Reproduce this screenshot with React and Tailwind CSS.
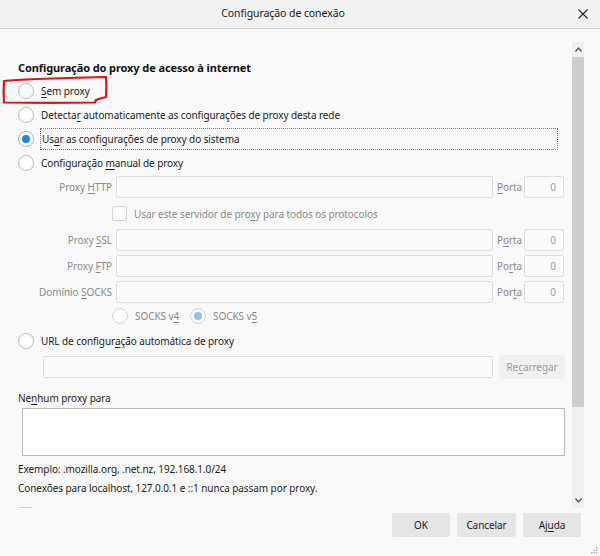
import React from "react";

const U = ({ children }) => <span className="underline underline-offset-2">{children}</span>;

function Radio({ checked = false, disabled = false }) {
  return (
    <div
      className={`w-[16px] h-[16px] rounded-full border shrink-0 flex items-center justify-center ${
        disabled ? "border-[#d6d6d6] bg-[#fbfbfb]" : checked ? "border-[#9bbcd6] bg-white" : "border-[#bdbdbd] bg-white"
      }`}
    >
      {checked && (
        <div className={`w-[8px] h-[8px] rounded-full ${disabled ? "bg-[#8fc3e8]" : "bg-[#1f87d6]"}`} />
      )}
    </div>
  );
}

function Input({ className = "", children }) {
  return (
    <div className={`h-[22px] shrink-0 border border-[#dedede] bg-[#fafafa] rounded-[2px] ${className}`}>{children}</div>
  );
}

function ProxyRow({ label, porta, className = "" }) {
  return (
    <div className={`flex items-center h-[22px] ${className}`}>
      <div className="w-[112px] text-right text-[#8a8a8a]">{label}</div>
      <Input className="ml-[4px] w-[377px]" />
      <div className="ml-[4px] w-[27px] text-[#8a8a8a] whitespace-nowrap">{porta}</div>
      <Input className="w-[40px] flex items-center justify-end pr-[7px] text-[#a0a0a0]">0</Input>
    </div>
  );
}

export default function App() {
  return (
    <div
      className="relative w-[600px] h-[556px] bg-[#f9f9f9] flex flex-col text-[10px] tracking-[-0.08px] text-[#1c1c1c] overflow-hidden"
      style={{ fontFamily: '"Noto Sans", "Open Sans", sans-serif' }}
    >
      {/* Title bar */}
      <div className="h-[29px] shrink-0 bg-[#f1f1f1] border-b border-[#cdcdcd] flex items-center">
        <div className="flex-1 text-center text-[10.5px] text-[#1a1a1a]">Configuração de conexão</div>
        <div className="w-[34px] flex items-center justify-center">
          <svg width="10" height="10" viewBox="0 0 10 10">
            <path d="M0.5 0.5 L9.5 9.5 M9.5 0.5 L0.5 9.5" stroke="#222" strokeWidth="1.1" />
          </svg>
        </div>
      </div>

      {/* Main */}
      <div className="flex flex-col pt-[13px] pr-[16px]">
        <div className="flex h-[466px] shrink-0">
          <div className="flex-1 overflow-hidden leading-[16px]">
            <div className="ml-[18px] mt-[18px] h-[16px] text-[11px] font-bold tracking-[-0.1px] text-[#111]">
              Configuração do proxy de acesso à internet
            </div>

            <div className="mt-[3px] h-[24px] flex items-center pl-[18px]">
              <Radio />
              <span className="ml-[7px]"><U>S</U>em proxy</span>
            </div>
            <div className="h-[24px] flex items-center pl-[18px]">
              <Radio />
              <span className="ml-[7px]">Detecta<U>r</U> automaticamente as configurações de proxy desta rede</span>
            </div>
            <div className="h-[24px] flex items-center pl-[18px]">
              <Radio checked />
              <div className="ml-[6px] w-[518px] h-[22px] border border-dotted border-[#7a7a7a] pl-[1px] flex items-center">
                Us<U>a</U>r as configurações de proxy do sistema
              </div>
            </div>
            <div className="h-[24px] flex items-center pl-[18px]">
              <Radio />
              <span className="ml-[7px]">Configuração <U>m</U>anual de proxy</span>
            </div>

            <ProxyRow className="mt-[1px]" label={<>Proxy <U>H</U>TTP</>} porta={<><U>P</U>orta</>} />
            <div className="h-[31px] flex items-center pl-[112px]">
              <div className="w-[15px] h-[15px] border border-[#d4d4d4] rounded-[2px] bg-[#fbfbfb]" />
              <span className="ml-[7px] text-[#8a8a8a]">Usar este servidor de pro<U>x</U>y para todos os protocolos</span>
            </div>
            <ProxyRow label={<>Proxy <U>S</U>SL</>} porta={<>P<U>o</U>rta</>} />
            <ProxyRow className="mt-[4px]" label={<>Proxy <U>F</U>TP</>} porta={<>Po<U>r</U>ta</>} />
            <ProxyRow className="mt-[4px]" label={<>Domínio <U>S</U>OCKS</>} porta={<>Por<U>t</U>a</>} />

            <div className="h-[26px] flex items-center pl-[112px] text-[#8a8a8a]">
              <div className="w-[78px] flex items-center">
                <Radio disabled />
                <span className="ml-[7px]">SOCKS v<U>4</U></span>
              </div>
              <Radio checked disabled />
              <span className="ml-[7px]">SOCKS v<U>5</U></span>
            </div>

            <div className="h-[24px] flex items-center pl-[18px]">
              <Radio />
              <span className="ml-[7px]">URL de configur<U>a</U>ção automática de proxy</span>
            </div>
            <div className="mt-[2px] h-[24px] flex items-center pl-[43px]">
              <Input className="w-[450px]" />
              <div className="ml-[6px] w-[66px] h-[24px] bg-[#f0f0f0] rounded-[2px] flex items-center justify-center text-[#9a9a9a]">
                Re<U>c</U>arregar
              </div>
            </div>

            <div className="mt-[11px] ml-[18px] h-[16px]">Ne<U>n</U>hum proxy para</div>
            <div className="mt-[2px] ml-[22px] w-[543px] h-[48px] bg-white border border-[#bcbcbc]" />
            <div className="mt-[5px] ml-[18px] h-[16px]">Exemplo: .mozilla.org, .net.nz, 192.168.1.0/24</div>
            <div className="mt-[3px] ml-[18px] h-[16px]">Conexões para localhost, 127.0.0.1 e ::1 nunca passam por proxy.</div>
            <div className="mt-[11px] ml-[18px] w-[15px] h-[15px] border border-[#d0d0d0] rounded-[2px] bg-white" />
          </div>

          {/* Scrollbar */}
          <div className="w-[12px] flex flex-col bg-[#f0f0f0]">
            <div className="h-[15px] shrink-0 flex items-center justify-center">
              <svg width="7" height="5" viewBox="0 0 7 5">
                <path d="M0.5 4.5 L3.5 1 L6.5 4.5" stroke="#555" strokeWidth="1.3" fill="none" />
              </svg>
            </div>
            <div className="h-[350px] shrink-0 bg-[#cdcdcd]" />
            <div className="flex-1" />
            <div className="h-[15px] shrink-0 flex items-center justify-center">
              <svg width="7" height="5" viewBox="0 0 7 5">
                <path d="M0.5 0.5 L3.5 4 L6.5 0.5" stroke="#555" strokeWidth="1.3" fill="none" />
              </svg>
            </div>
          </div>
        </div>

        {/* Buttons */}
        <div className="mt-[5px] flex justify-end gap-[7px] mr-[3px]">
          <div className="w-[58px] h-[24px] bg-[#e5e5e5] rounded-[2px] flex items-center justify-center">OK</div>
          <div className="w-[59px] h-[24px] bg-[#e5e5e5] rounded-[2px] flex items-center justify-center">Cancelar</div>
          <div className="w-[58px] h-[24px] bg-[#e5e5e5] rounded-[2px] flex items-center justify-center">
            Aj<U>u</U>da
          </div>
        </div>
      </div>

      {/* Resize grip */}
      <svg className="absolute right-[2px] bottom-[2px]" width="7" height="7" viewBox="0 0 7 7">
        <rect x="5" y="0" width="1.5" height="1.5" fill="#b0b0b0" />
        <rect x="2.5" y="2.5" width="1.5" height="1.5" fill="#b0b0b0" />
        <rect x="5" y="2.5" width="1.5" height="1.5" fill="#b0b0b0" />
        <rect x="0" y="5" width="1.5" height="1.5" fill="#b0b0b0" />
        <rect x="2.5" y="5" width="1.5" height="1.5" fill="#b0b0b0" />
        <rect x="5" y="5" width="1.5" height="1.5" fill="#b0b0b0" />
      </svg>

      {/* Red annotation */}
      <svg className="absolute left-0 top-0 pointer-events-none" width="120" height="110" viewBox="0 0 120 110">
        <path
          d="M4 81 C20 79 60 78 106 77 C106.5 84 106.5 91 106 97 C102 98 98 99 96 100 L95 102.5 C70 103 30 103 4 102.5 C3.5 95 3.5 88 4 81 Z"
          stroke="#e1131a"
          strokeWidth="2.2"
          fill="none"
          strokeLinejoin="round"
        />
      </svg>
    </div>
  );
}
